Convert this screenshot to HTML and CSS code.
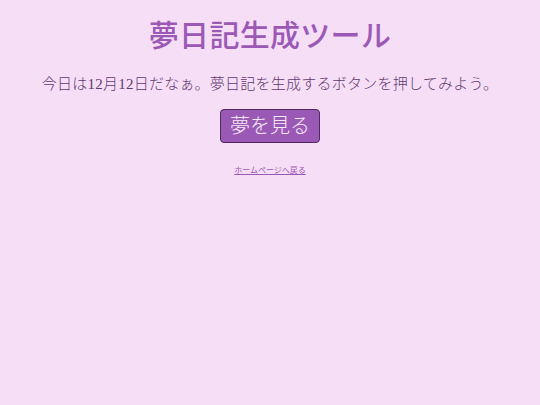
FILE: index.html
```html
<!DOCTYPE html>
<html lang="ja">
<head>
<meta charset="utf-8">
<title>夢日記生成ツール</title>
<link rel="stylesheet" href="styles.css">
</head>
<body>
<main class="page">
  <h1 class="title">夢日記生成ツール</h1>
  <p class="lead">今日は12月12日だなぁ。夢日記を生成するボタンを押してみよう。</p>
  <button class="dream-btn" type="button">夢を見る</button>
  <a class="home-link" href="#">ホームページへ戻る</a>
</main>
</body>
</html>
```
FILE: styles.css
```css
html, body {
  margin: 0;
  padding: 0;
  background: #f7def7;
}
body {
  font-family: "Liberation Serif", "Noto Sans CJK JP", serif;
}
.page {
  display: flex;
  flex-direction: column;
  align-items: center;
  text-align: center;
  padding-top: 16px;
}
.title {
  margin: 0;
  font-size: 30px;
  line-height: 40px;
  font-weight: 500;
  letter-spacing: 0.3px;
  color: #9b59b6;
}
.lead {
  margin: 18px 0 0;
  font-size: 15px;
  line-height: 20px;
  font-weight: 300;
  letter-spacing: 0.25px;
  color: #5f3a6e;
}
.dream-btn {
  margin-top: 15px;
  font-family: "Liberation Serif", "Noto Sans CJK JP", serif;
  font-size: 20px;
  line-height: 24px;
  font-weight: 300;
  padding: 4px 9px;
  color: #f6e9f6;
  background: #9b59b6;
  border: 1px solid #4e2a5e;
  border-radius: 4px;
}
.home-link {
  margin-top: 23px;
  font-size: 8px;
  line-height: 10px;
  color: #9b59b6;
}
```
